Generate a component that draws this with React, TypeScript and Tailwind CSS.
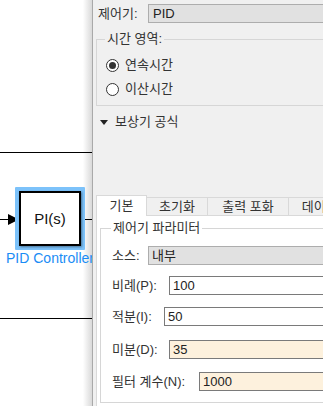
import React from 'react'

type Param = {
  label: string
  value: string
  labelW: string
  mt: string
  box: string
}

const params: Param[] = [
  { label: '소스:', value: '내부', labelW: 'w-[36px]', mt: 'mt-[10px]', box: 'border-[#adadad] bg-[#e1e1e1]' },
  { label: '비례(P):', value: '100', labelW: 'w-[57px]', mt: 'mt-[11px]', box: 'border-[#7a7a7a] bg-white' },
  { label: '적분(I):', value: '50', labelW: 'w-[52px]', mt: 'mt-[12px]', box: 'border-[#7a7a7a] bg-white' },
  { label: '미분(D):', value: '35', labelW: 'w-[57px]', mt: 'mt-[14px]', box: 'border-[#7a7a7a] bg-[#fdf1dd]' },
  { label: '필터 계수(N):', value: '1000', labelW: 'w-[87px]', mt: 'mt-[13px]', box: 'border-[#7a7a7a] bg-[#fdf1dd]' },
]

const tabs = [
  { label: '초기화', w: 'w-[61px]' },
  { label: '출력 포화', w: 'w-[81px]' },
  { label: '데이터 유형', w: 'w-[90px]' },
]

function Radio({ checked, label }: { checked?: boolean; label: string }) {
  return (
    <div className="flex h-[16px] items-center">
      <span className="flex h-[13px] w-[13px] items-center justify-center rounded-full border border-[#333] bg-white">
        {checked && <span className="h-[7px] w-[7px] rounded-full bg-[#333]" />}
      </span>
      <span className="ml-[6px]">{label}</span>
    </div>
  )
}

function Canvas() {
  return (
    <div className="relative h-full w-[92px] shrink-0 bg-[linear-gradient(to_right,#ffffff_90%,#d9d9d9)]">
      {/* signal lines */}
      <div className="absolute left-0 top-[152px] h-px w-[92px] bg-black" />
      <div className="absolute left-0 top-[318px] h-px w-[92px] bg-black" />
      <div className="absolute left-0 top-[219px] h-px w-[9px] bg-black" />
      <div className="absolute left-[80px] top-[219px] h-px w-[12px] bg-black" />
      <svg className="absolute left-[8px] top-[214px]" width="11" height="11" viewBox="0 0 11 11">
        <polygon points="0,0 11,5.5 0,11" fill="black" />
      </svg>

      {/* PID block */}
      <div className="absolute left-[15px] top-[187px] h-[63px] w-[70px] rounded-[1px] bg-[#7cc2fa] p-[4px]">
        <div className="flex h-full w-full items-center justify-center border-2 border-black bg-white font-['Liberation_Sans',sans-serif] text-[15px] text-[#111] shadow-[1px_1px_2px_rgba(0,0,0,0.4)]">
          PI(s)
        </div>
      </div>
      <div className="absolute left-[-10px] top-[250px] w-[120px] whitespace-nowrap text-center font-['Liberation_Sans',sans-serif] text-[14px] leading-[16px] text-[#1a8cf5]">
        PID Controller
      </div>
    </div>
  )
}

export default function App() {
  return (
    <div className="flex h-[406px] w-[323px] overflow-hidden bg-white font-['Liberation_Sans','Noto_Sans_CJK_KR',sans-serif] text-[13px] leading-[16px] text-[#333]">
      <Canvas />

      <div className="relative z-10 flex h-full w-[290px] shrink-0 flex-col border-l border-[#a9a9a9] bg-[#f0f0f0]">
        {/* controller */}
        <div className="mt-[4px] flex h-[19px] items-center pl-[5px]">
          <span className="w-[50px]">제어기:</span>
          <div className="flex h-full flex-1 items-center border border-[#adadad] bg-[#e1e1e1] pl-[4px] text-[#222]">
            PID
          </div>
        </div>

        {/* time domain */}
        <fieldset className="ml-[3px] mt-[8px] border border-[#d6d6d6] pb-[8px] pl-[9px]">
          <legend className="ml-[-1px] px-[2px]">시간 영역:</legend>
          <div className="mt-[10px]">
            <Radio checked label="연속시간" />
          </div>
          <div className="mt-[8px]">
            <Radio label="이산시간" />
          </div>
        </fieldset>

        <div className="mt-[8px] flex h-[16px] items-center pl-[7px]">
          <svg width="8" height="5" viewBox="0 0 8 5">
            <polygon points="0,0 8,0 4,5" fill="#222" />
          </svg>
          <span className="ml-[7px]">보상기 공식</span>
        </div>

        {/* tabs */}
        <div className="ml-[3px] mt-[65px] flex items-end">
          <div className="flex h-[21px] w-[51px] items-center justify-center border border-b-0 border-[#d9d9d9] bg-white">
            기본
          </div>
          {tabs.map(t => (
            <div
              key={t.label}
              className={`flex h-[19px] shrink-0 items-center justify-center border-b border-r border-t border-[#d9d9d9] bg-[#f0f0f0] ${t.w}`}
            >
              {t.label}
            </div>
          ))}
        </div>

        <div className="ml-[3px] flex-1 border-l border-[#d9d9d9] bg-white pl-[3px] pt-[4px]">
          <fieldset className="border border-[#d6d6d6] pb-[11px] pl-[11px]">
            <legend className="ml-[-1px] px-[2px]">제어기 파라미터</legend>
            {params.map(p => (
              <div key={p.label} className={`flex h-[19px] items-center ${p.mt}`}>
                <span className={`shrink-0 whitespace-nowrap ${p.labelW}`}>{p.label}</span>
                <div className={`flex h-full flex-1 items-center border pl-[3px] text-[#222] ${p.box}`}>
                  {p.value}
                </div>
              </div>
            ))}
          </fieldset>
        </div>
      </div>
    </div>
  )
}
